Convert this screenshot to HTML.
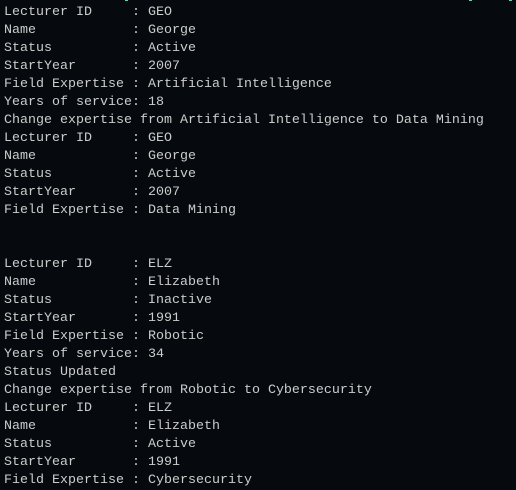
<!DOCTYPE html>
<html><head><meta charset="utf-8"><style>
html,body{margin:0;padding:0;background:#060a0e;width:516px;height:486px;overflow:hidden}
pre{margin:0;position:absolute;left:4px;top:4px;font-family:"Liberation Mono",monospace;font-size:13.33px;line-height:18px;color:#cccccc}
.g{position:absolute;top:0;height:1px;width:3px;background:#5fd3a8}
</style></head><body>
<div class="g" style="left:125px"></div><div class="g" style="left:469px"></div><div class="g" style="left:509px"></div>
<pre>Lecturer ID     : GEO
Name            : George
Status          : Active
StartYear       : 2007
Field Expertise : Artificial Intelligence
Years of service: 18
Change expertise from Artificial Intelligence to Data Mining
Lecturer ID     : GEO
Name            : George
Status          : Active
StartYear       : 2007
Field Expertise : Data Mining


Lecturer ID     : ELZ
Name            : Elizabeth
Status          : Inactive
StartYear       : 1991
Field Expertise : Robotic
Years of service: 34
Status Updated
Change expertise from Robotic to Cybersecurity
Lecturer ID     : ELZ
Name            : Elizabeth
Status          : Active
StartYear       : 1991
Field Expertise : Cybersecurity</pre>
</body></html>
